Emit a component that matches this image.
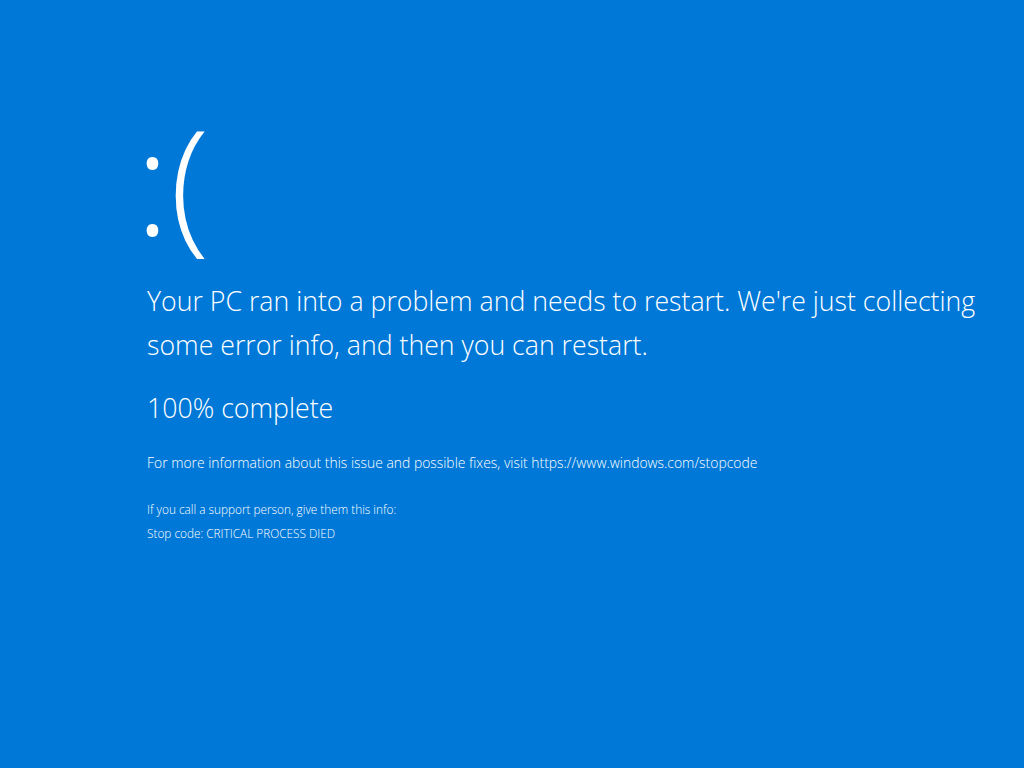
import React from 'react';

const App: React.FC = () => {
  return (
    <div
      className="w-[1024px] h-[768px] bg-[#0078d7] text-white overflow-hidden"
      style={{ fontFamily: '"Open Sans", "Noto Sans", sans-serif' }}
    >
      <div className="pl-[147px] pt-[100px]">
        {/* Sad face */}
        <div className="-ml-[12px] text-[146px] leading-[160px] font-light">:(</div>

        <p className="mt-[19px] w-[850px] text-[26.7px] leading-[44px] font-light">
          Your PC ran into a problem and needs to restart. We're just collecting some error info, and then you can restart.
        </p>

        <p className="mt-[19px] text-[26.7px] leading-[44px] font-light">100% complete</p>

        <p className="mt-[23px] text-[13.9px] leading-[20px] font-light">
          For more information about this issue and possible fixes, visit https://www.windows.com/stopcode
        </p>

        <div className="mt-[24px] text-[11.8px] leading-[24px] font-light">
          <p>If you call a support person, give them this info:</p>
          <p>Stop code: CRITICAL PROCESS DIED</p>
        </div>
      </div>
    </div>
  );
};

export default App;
